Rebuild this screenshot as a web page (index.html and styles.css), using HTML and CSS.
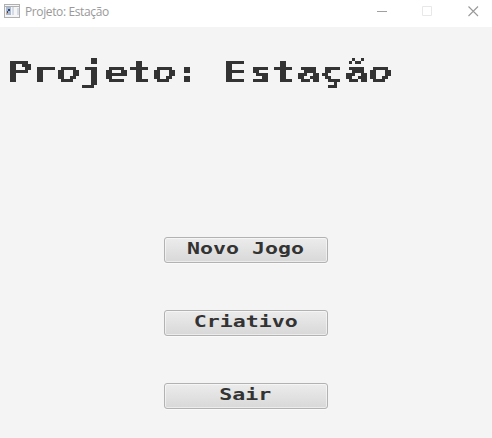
FILE: index.html
```html
<!DOCTYPE html>
<html lang="pt-BR">
<head>
<meta charset="utf-8">
<title>Projeto: Estação</title>
<link rel="stylesheet" href="styles.css">
</head>
<body>
<header class="titlebar">
  <svg class="app-icon" width="16" height="14" viewBox="0 0 16 14" shape-rendering="crispEdges">
    <path fill="#b0b0b0" d="M0 0h16v14H0z"/>
    <path fill="#f5f5f5" d="M1 1h14v1H1zM1 3h14v10H1z"/>
    <path fill="#a9bbd5" d="M2 3h5v8H2z"/>
    <path fill="#34466f" d="M4 5h2v2H4zM3 7h1v2H3z"/>
    <path fill="#d9a066" d="M2 9h2v1H2z"/>
    <path fill="#d5dce8" d="M8 3h2v8H8zM13 4h2v7h-2z"/>
  </svg>
  <span class="caption">Projeto: Estação</span>
  <svg class="controls" width="102" height="12" viewBox="0 0 102 12" fill="none">
    <path stroke="#a0a0a0" d="M0 5.500h10"/>
    <path stroke="#e8e8e8" d="M45.500 .5h9v9h-9z"/>
    <path stroke="#999" stroke-width="1.100" d="M91.500 .5l9.500 9.500M101 .5l-9.500 9.500"/>
  </svg>
</header>
<main>
  <h1><span class="pixel">Projeto: Estação</span></h1>
  <nav class="menu">
    <button><span class="pixel">Novo Jogo</span></button>
    <button><span class="pixel">Criativo</span></button>
    <button><span class="pixel">Sair</span></button>
  </nav>
</main>
<svg class="filters" width="0" height="0">
  <filter id="blocks" filterUnits="userSpaceOnUse" x="0" y="0" width="492" height="120" color-interpolation-filters="sRGB">
    <feFlood x="2" y="2" width="1" height="1" flood-color="#000"/>
    <feComposite x="1" y="1" width="3" height="3"/>
    <feTile result="grid"/>
    <feComposite in="SourceGraphic" in2="grid" operator="in"/>
    <feComponentTransfer><feFuncA type="discrete" tableValues="0 1"/></feComponentTransfer>
    <feMorphology operator="dilate" radius="1"/>
    <feComposite result="shape"/>
    <feFlood flood-color="#333"/>
    <feComposite in2="shape" operator="in"/>
  </filter>
</svg>
</body>
</html>
```
FILE: styles.css
```css
* { box-sizing: border-box; }
body {
  margin: 0;
  height: 438px;
  overflow: hidden;
  background: #f4f4f4;
  color: #333;
}
.titlebar {
  display: flex;
  height: 27px;
  padding: 4px 13px 0 4px;
  background: #fff;
}
.caption {
  margin-left: 5px;
  font: 12px/16px "Open Sans", "Noto Sans", sans-serif;
  letter-spacing: -0.38px;
  color: #999;
}
.controls { margin: 2px 0 0 auto; }
.filters { display: block; }
.pixel {
  display: inline-block;
  white-space: pre;
  font-family: "DejaVu Sans Mono", monospace;
  font-weight: bold;
}
h1 {
  margin: 0;
  padding: 27px 0 0 8px;
  height: 210px;
  font-size: 29px;
  line-height: 36px;
  filter: url(#blocks);
}
h1 .pixel {
  transform: scaleX(1.375);
  transform-origin: left;
}
.menu {
  display: flex;
  flex-direction: column;
  align-items: center;
  gap: 47px;
}
button {
  width: 164px;
  height: 26px;
  padding: 0;
  border: 1px solid #b2b2b2;
  border-radius: 3px;
  background: linear-gradient(#ececec, #d8d8d8);
  box-shadow: inset 0 0 0 1px #ffffff80, 0 1px 0 #fafafa;
  color: #333;
  font-size: 15.5px;
  line-height: 22px;
}
button .pixel {
  font-size: 15.5px;
  line-height: 20px;
  transform: translate(-0.5px, -1px) scaleX(1.393);
}
```
